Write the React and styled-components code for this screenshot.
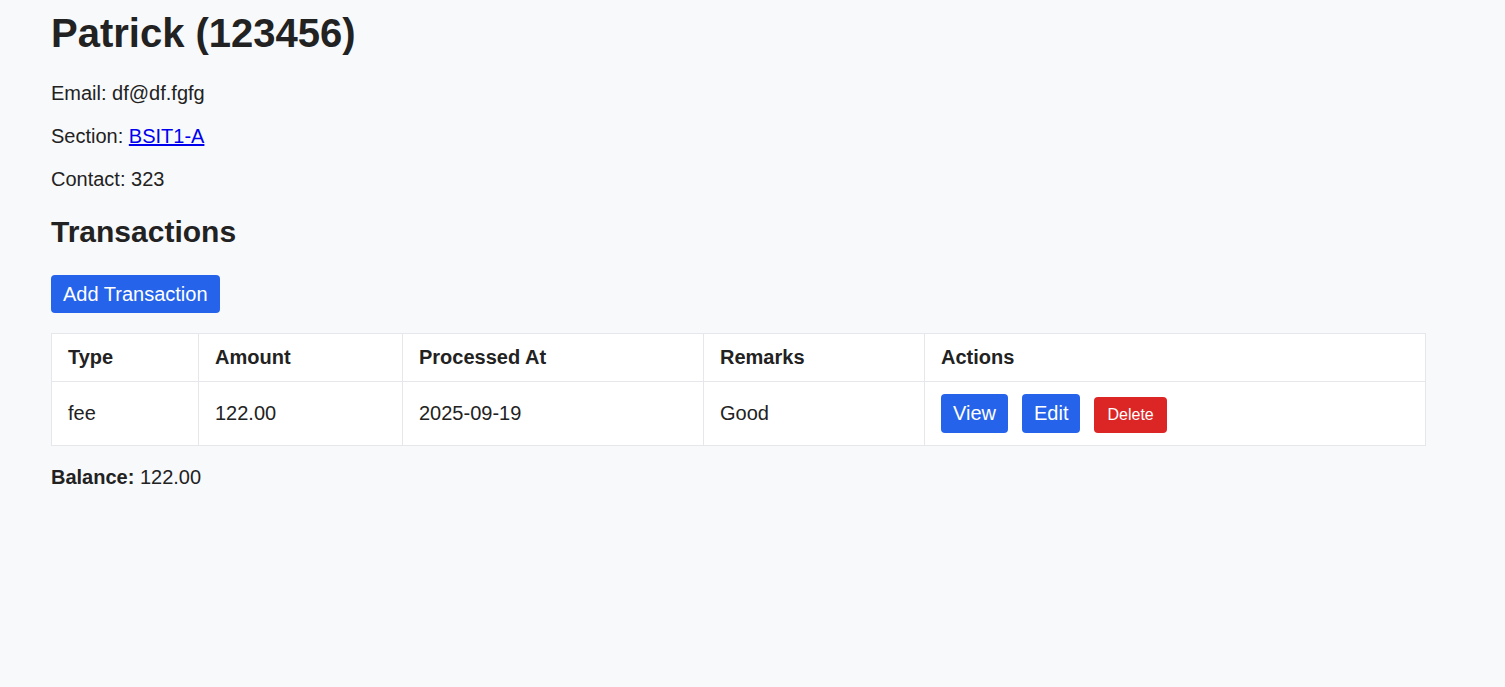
import React from "react"
import styled, { createGlobalStyle } from "styled-components"

const Global = createGlobalStyle`
  body {
    margin: 0;
    background: #f8f9fb;
    color: #222;
    font-family: "Liberation Sans", Arial, sans-serif;
    font-size: 20px;
  }
`

const Page = styled.div`
  padding: 10px 0 40px 51px;
  width: 1375px;
`

const Title = styled.h1`
  font-size: 40px;
  margin: 0 0 26px;
  line-height: 46px;
`

const Info = styled.p`
  margin: 20px 0;
  line-height: 23px;
`

const SectionLink = styled.a`
  color: #0000ee;
  text-decoration: underline;
`

const Heading = styled.h2`
  font-size: 30px;
  line-height: 34px;
  margin: 24px 0 26px;
`

const Button = styled.button`
  font-family: inherit;
  font-size: ${({ $small }) => ($small ? "16px" : "20px")};
  line-height: ${({ $small }) => ($small ? "18px" : "23px")};
  padding: ${({ $small }) => ($small ? "9px 13px" : "8px 12px")};
  border: none;
  border-radius: 4px;
  color: #fff;
  background: ${({ $danger }) => ($danger ? "#dc2626" : "#2563eb")};
  cursor: pointer;
`

const AddButton = styled(Button)`
  padding: 7.5px 12px;
`

const Table = styled.table`
  width: 100%;
  margin-top: 20px;
  border-collapse: collapse;
  background: #fff;
`

const Th = styled.th`
  box-sizing: border-box;
  text-align: left;
  font-weight: bold;
  padding: 12px 16px;
  line-height: 23px;
  border: 1px solid #e5e7eb;
  width: ${({ $w }) => $w};
`

const Td = styled.td`
  padding: 12px 16px;
  line-height: 23px;
  border: 1px solid #e5e7eb;
  vertical-align: middle;
`

const Actions = styled.div`
  display: flex;
  align-items: baseline;
  gap: 14px;
`

const Balance = styled.p`
  margin: 20px 0;
  line-height: 23px;
`

const columns = [
  { label: "Type", w: "147px" },
  { label: "Amount", w: "204px" },
  { label: "Processed At", w: "301px" },
  { label: "Remarks", w: "221px" },
  { label: "Actions", w: "auto" },
]

const rows = [{ type: "fee", amount: "122.00", date: "2025-09-19", remarks: "Good" }]

export default function App() {
  return (
    <Page>
      <Global />
      <Title>Patrick (123456)</Title>
      <Info>Email: df@df.fgfg</Info>
      <Info>
        Section: <SectionLink href="#">BSIT1-A</SectionLink>
      </Info>
      <Info>Contact: 323</Info>

      <Heading>Transactions</Heading>
      <AddButton>Add Transaction</AddButton>

      <Table>
        <thead>
          <tr>
            {columns.map((c) => (
              <Th key={c.label} $w={c.w}>{c.label}</Th>
            ))}
          </tr>
        </thead>
        <tbody>
          {rows.map((r, i) => (
            <tr key={i}>
              <Td>{r.type}</Td>
              <Td>{r.amount}</Td>
              <Td>{r.date}</Td>
              <Td>{r.remarks}</Td>
              <Td>
                <Actions>
                  <Button>View</Button>
                  <Button>Edit</Button>
                  <Button $small $danger>Delete</Button>
                </Actions>
              </Td>
            </tr>
          ))}
        </tbody>
      </Table>

      <Balance>
        <strong>Balance:</strong> 122.00
      </Balance>
    </Page>
  )
}
